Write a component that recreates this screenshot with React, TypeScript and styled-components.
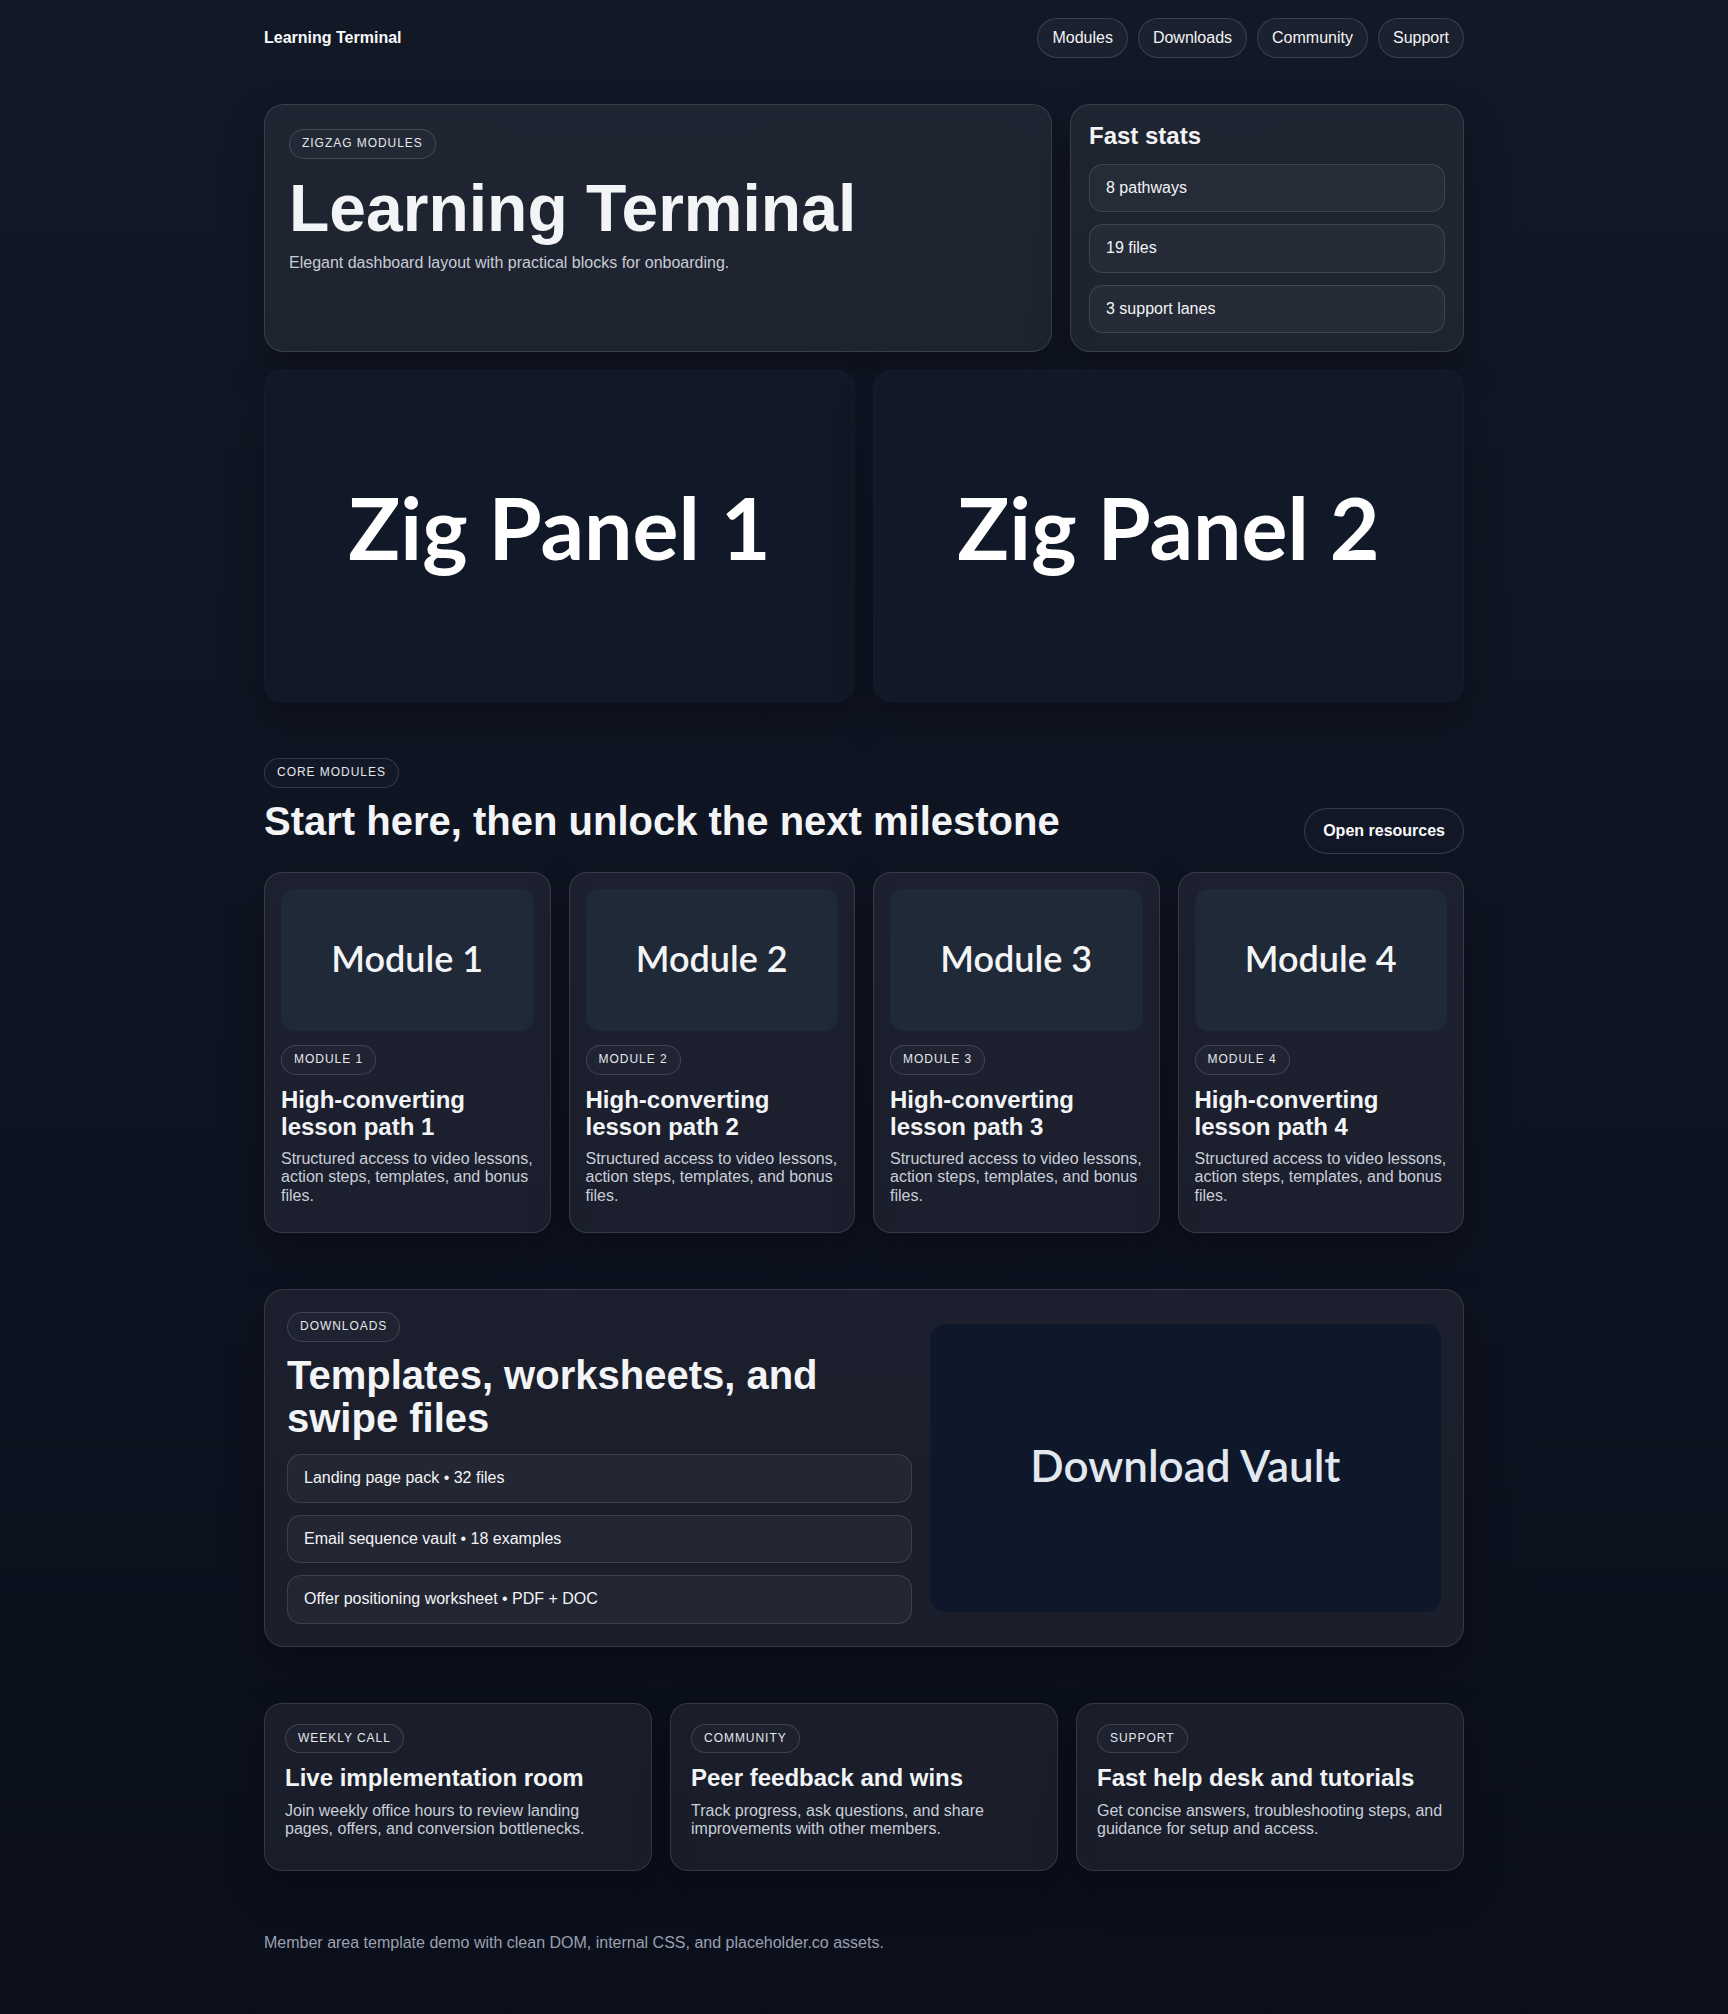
import React from "react";
import styled, { createGlobalStyle } from "styled-components";

const GlobalStyle = createGlobalStyle`
  html, body { margin: 0; padding: 0; }
  body {
    background: linear-gradient(180deg, #121826 0%, #0f1422 45%, #0b0f1c 100%);
    color: #f3f4f6;
    font-family: "Liberation Sans", Arial, Helvetica, sans-serif;
    font-size: 16px;
    line-height: 1.15;
    min-height: 100vh;
  }
  * { box-sizing: border-box; }
`;

const Shell = styled.div`
  max-width: 1200px;
  margin: 0 auto;
`;

const Header = styled.header`
  display: flex;
  align-items: center;
  justify-content: space-between;
  padding: 18px 0;
`;

const Brand = styled.div`
  font-weight: 700;
  font-size: 16px;
  color: #f9fafb;
`;

const Nav = styled.nav`
  display: flex;
  gap: 10px;
`;

const NavPill = styled.a`
  display: inline-block;
  padding: 10px 14px;
  border-radius: 999px;
  border: 1px solid rgba(255, 255, 255, 0.14);
  background: rgba(255, 255, 255, 0.04);
  color: #f3f4f6;
  font-size: 16px;
  text-decoration: none;
`;

const Main = styled.main`
  margin-top: 28px;
`;

const TopGrid = styled.div`
  display: grid;
  grid-template-columns: minmax(0, 2fr) minmax(0, 1fr);
  gap: 18px;
`;

const Card = styled.div<{ $pad: number; $radius?: number }>`
  background: rgba(255, 255, 255, 0.06);
  border: 1px solid rgba(255, 255, 255, 0.12);
  border-radius: ${(p) => p.$radius ?? 20}px;
  padding: ${(p) => p.$pad}px;
  box-shadow: 0 18px 40px rgba(0, 0, 0, 0.28);
`;

const FlowCard = styled(Card)`
  display: flex;
  flex-direction: column;
  align-items: flex-start;
`;

const Badge = styled.span<{ $mt?: number }>`
  display: inline-block;
  padding: 7px 12px;
  margin-top: ${(p) => p.$mt ?? 0}px;
  border-radius: 999px;
  border: 1px solid rgba(255, 255, 255, 0.15);
  background: rgba(255, 255, 255, 0.02);
  color: #e5e7eb;
  font-size: 12px;
  line-height: 1.15;
  letter-spacing: 0.08em;
  text-transform: uppercase;
`;

const HeroTitle = styled.h1`
  margin: 13px 0 9px;
  font-size: 66px;
  line-height: 1.1;
  font-weight: 700;
  color: #f3f4f6;
`;

const Lead = styled.p`
  margin: 0;
  color: #c7ccd6;
  font-size: 16px;
`;

const StatsTitle = styled.h3`
  margin: 0 0 14px;
  font-size: 24px;
  line-height: 1.1;
  font-weight: 700;
`;

const List = styled.div`
  display: flex;
  flex-direction: column;
  gap: 12px;
  align-self: stretch;
`;

const ListItem = styled.div`
  padding: 14px 16px;
  border-radius: 14px;
  border: 1px solid rgba(255, 255, 255, 0.12);
  background: rgba(255, 255, 255, 0.035);
  color: #f3f4f6;
  font-size: 16px;
`;

const ZigGrid = styled.div`
  display: grid;
  grid-template-columns: minmax(0, 1fr) minmax(0, 1fr);
  gap: 18px;
  margin-top: 18px;
`;

const Placeholder = styled.div<{
  $bg: string;
  $fg: string;
  $size: number;
  $radius: number;
  $lift: number;
}>`
  aspect-ratio: 16 / 9;
  width: 100%;
  min-width: 0;
  display: flex;
  align-items: center;
  justify-content: center;
  padding-bottom: ${(p) => p.$lift}px;
  background: ${(p) => p.$bg};
  color: ${(p) => p.$fg};
  border-radius: ${(p) => p.$radius}px;
  font-family: Lato, "Noto Sans", sans-serif;
  font-weight: 600;
  font-size: ${(p) => p.$size}px;
  line-height: 1;
  white-space: nowrap;
`;

const ZigPanel = styled(Placeholder)`
  box-shadow: 0 18px 40px rgba(0, 0, 0, 0.28);
  border: 1px solid rgba(255, 255, 255, 0.02);
  font-weight: 700;
`;

const Section = styled.section`
  margin-top: 56px;
`;

const SectionHead = styled.div`
  display: flex;
  align-items: flex-end;
  justify-content: space-between;
  gap: 24px;
`;

const SectionTitle = styled.h2<{ $mb?: number }>`
  margin: 12px 0 ${(p) => p.$mb ?? 10}px;
  font-size: 40px;
  line-height: 1.08;
  font-weight: 700;
  color: #f3f4f6;
`;

const GhostButton = styled.a`
  display: inline-block;
  padding: 13px 18px;
  border-radius: 999px;
  border: 1px solid rgba(255, 255, 255, 0.16);
  background: rgba(255, 255, 255, 0.015);
  color: #f9fafb;
  font-weight: 700;
  font-size: 16px;
  text-decoration: none;
  white-space: nowrap;
`;

const ModuleGrid = styled.div`
  display: grid;
  grid-template-columns: repeat(4, minmax(0, 1fr));
  gap: 18px;
  margin-top: 18px;
`;

const CardTitle = styled.h3<{ $mb?: number }>`
  margin: 12px 0 ${(p) => p.$mb ?? 10}px;
  font-size: 24px;
  line-height: 1.1;
  font-weight: 700;
  color: #f3f4f6;
`;

const CardText = styled.p<{ $mb?: number }>`
  margin: 0 0 ${(p) => p.$mb ?? 12}px;
  font-size: 16px;
  line-height: 1.15;
  color: #c9ced8;
`;

const DownloadsGrid = styled.div`
  display: grid;
  grid-template-columns: minmax(0, 1.1fr) minmax(0, 0.9fr);
  gap: 18px;
  align-items: center;
`;

const DownloadsLeft = styled.div`
  display: flex;
  flex-direction: column;
  align-items: flex-start;
  min-width: 0;
`;

const InfoGrid = styled.div`
  display: grid;
  grid-template-columns: repeat(3, minmax(0, 1fr));
  gap: 18px;
`;

const Footer = styled.footer`
  padding: 63px 0 60px;
  color: #9aa0ad;
  font-size: 16px;
`;

const modules = [1, 2, 3, 4];

const info = [
  {
    tag: "Weekly call",
    title: "Live implementation room",
    text: "Join weekly office hours to review landing pages, offers, and conversion bottlenecks.",
  },
  {
    tag: "Community",
    title: "Peer feedback and wins",
    text: "Track progress, ask questions, and share improvements with other members.",
  },
  {
    tag: "Support",
    title: "Fast help desk and tutorials",
    text: "Get concise answers, troubleshooting steps, and guidance for setup and access.",
  },
];

export default function App() {
  return (
    <>
      <GlobalStyle />
      <Shell>
        <Header>
          <Brand>Learning Terminal</Brand>
          <Nav>
            <NavPill href="#">Modules</NavPill>
            <NavPill href="#">Downloads</NavPill>
            <NavPill href="#">Community</NavPill>
            <NavPill href="#">Support</NavPill>
          </Nav>
        </Header>

        <Main>
          <TopGrid>
            <FlowCard $pad={24}>
              <Badge>Zigzag modules</Badge>
              <HeroTitle>Learning Terminal</HeroTitle>
              <Lead>Elegant dashboard layout with practical blocks for onboarding.</Lead>
            </FlowCard>
            <FlowCard $pad={18}>
              <StatsTitle>Fast stats</StatsTitle>
              <List>
                <ListItem>8 pathways</ListItem>
                <ListItem>19 files</ListItem>
                <ListItem>3 support lanes</ListItem>
              </List>
            </FlowCard>
          </TopGrid>

          <ZigGrid>
            <ZigPanel $bg="#111827" $fg="#ffffff" $size={86} $radius={18} $lift={19}>
              Zig Panel 1
            </ZigPanel>
            <ZigPanel $bg="#111827" $fg="#ffffff" $size={86} $radius={18} $lift={19}>
              Zig Panel 2
            </ZigPanel>
          </ZigGrid>

          <Section>
            <SectionHead>
              <div>
                <Badge>Core modules</Badge>
                <SectionTitle $mb={11}>Start here, then unlock the next milestone</SectionTitle>
              </div>
              <GhostButton href="#">Open resources</GhostButton>
            </SectionHead>
            <ModuleGrid>
              {modules.map((n) => (
                <FlowCard key={n} $pad={16} $radius={18}>
                  <Placeholder $bg="#1f2937" $fg="#f3f4f6" $size={36} $radius={14} $lift={5}>
                    Module {n}
                  </Placeholder>
                  <Badge $mt={14}>Module {n}</Badge>
                  <CardTitle $mb={10}>High-converting lesson path {n}</CardTitle>
                  <CardText $mb={11}>
                    Structured access to video lessons, action steps, templates, and bonus files.
                  </CardText>
                </FlowCard>
              ))}
            </ModuleGrid>
          </Section>

          <Section>
            <Card $pad={22}>
              <DownloadsGrid>
                <DownloadsLeft>
                  <Badge>Downloads</Badge>
                  <SectionTitle $mb={14}>Templates, worksheets, and swipe files</SectionTitle>
                  <List>
                    <ListItem>Landing page pack • 32 files</ListItem>
                    <ListItem>Email sequence vault • 18 examples</ListItem>
                    <ListItem>Offer positioning worksheet • PDF + DOC</ListItem>
                  </List>
                </DownloadsLeft>
                <Placeholder $bg="#0f172a" $fg="#e2e8f0" $size={44} $radius={16} $lift={6}>
                  Download Vault
                </Placeholder>
              </DownloadsGrid>
            </Card>
          </Section>

          <Section>
            <InfoGrid>
              {info.map((c) => (
                <FlowCard key={c.tag} $pad={20} $radius={18}>
                  <Badge>{c.tag}</Badge>
                  <CardTitle>{c.title}</CardTitle>
                  <CardText>{c.text}</CardText>
                </FlowCard>
              ))}
            </InfoGrid>
          </Section>
        </Main>

        <Footer>Member area template demo with clean DOM, internal CSS, and placeholder.co assets.</Footer>
      </Shell>
    </>
  );
}
